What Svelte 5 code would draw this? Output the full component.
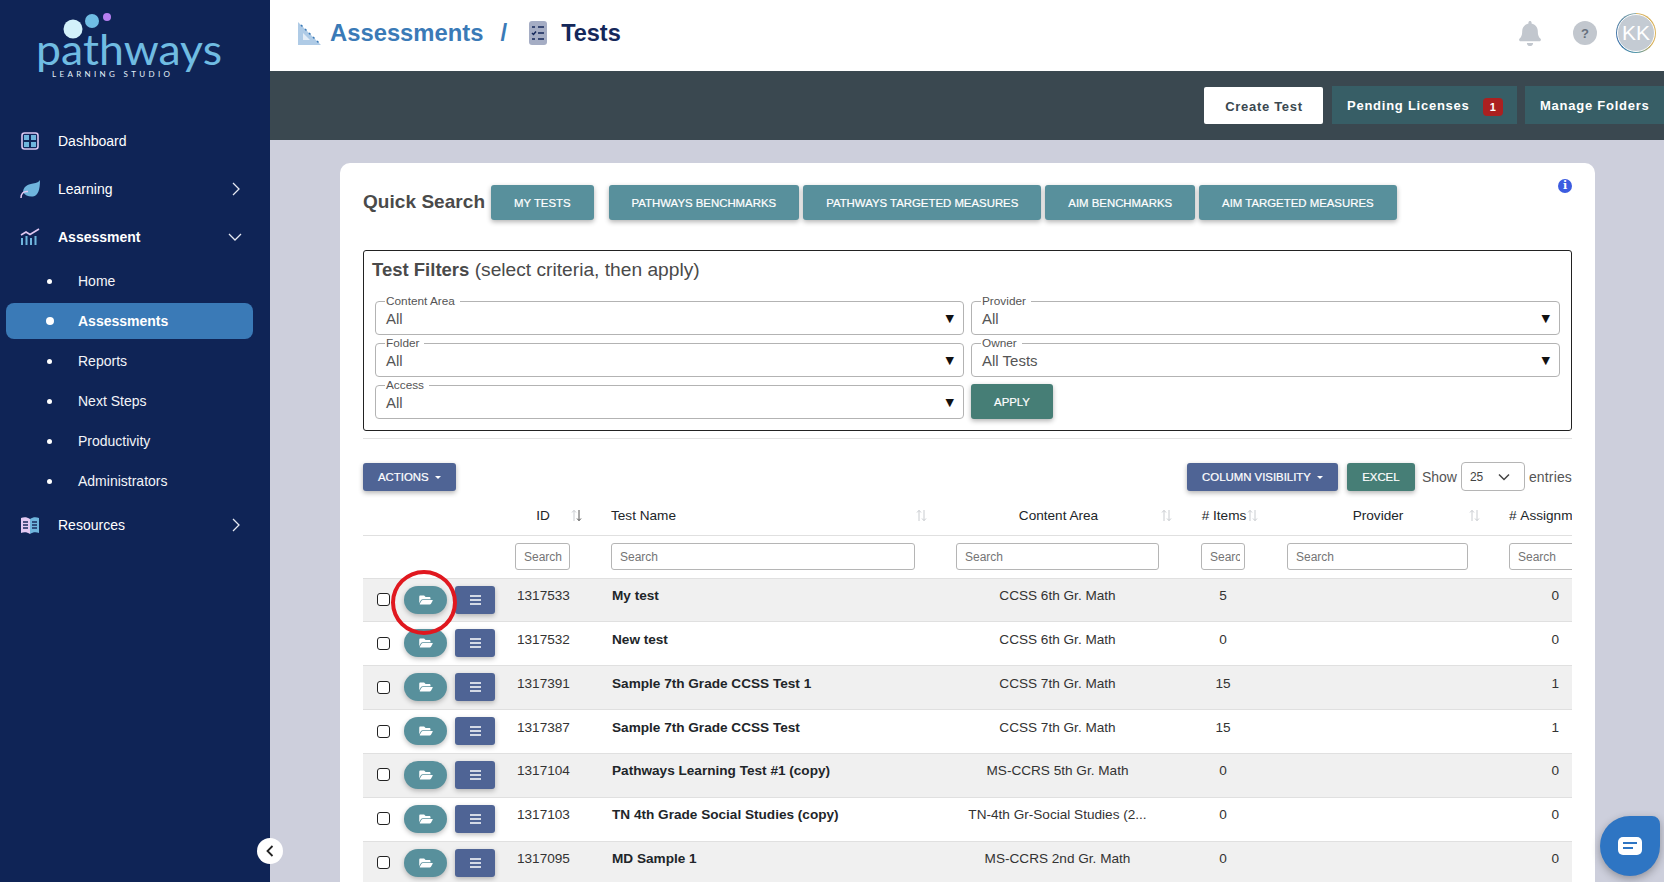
<script>
  const sub = ['Home', 'Assessments', 'Reports', 'Next Steps', 'Productivity', 'Administrators'];
  const tabs = ['MY TESTS', 'PATHWAYS BENCHMARKS', 'PATHWAYS TARGETED MEASURES', 'AIM BENCHMARKS', 'AIM TARGETED MEASURES'];
  const filters = [
    { label: 'Content Area', value: 'All' },
    { label: 'Provider', value: 'All' },
    { label: 'Folder', value: 'All' },
    { label: 'Owner', value: 'All Tests' },
    { label: 'Access', value: 'All' }
  ];
  const rows = [
    ['1317533', 'My test', 'CCSS 6th Gr. Math', '5', '0'],
    ['1317532', 'New test', 'CCSS 6th Gr. Math', '0', '0'],
    ['1317391', 'Sample 7th Grade CCSS Test 1', 'CCSS 7th Gr. Math', '15', '1'],
    ['1317387', 'Sample 7th Grade CCSS Test', 'CCSS 7th Gr. Math', '15', '1'],
    ['1317104', 'Pathways Learning Test #1 (copy)', 'MS-CCRS 5th Gr. Math', '0', '0'],
    ['1317103', 'TN 4th Grade Social Studies (copy)', 'TN-4th Gr-Social Studies (2...', '0', '0'],
    ['1317095', 'MD Sample 1', 'MS-CCRS 2nd Gr. Math', '0', '0']
  ];
  const cols = [
    { label: 'ID', cls: 'center', active: true },
    { label: 'Test Name', cls: 'left' },
    { label: 'Content Area', cls: 'center' },
    { label: '# Items', cls: 'center' },
    { label: 'Provider', cls: 'center' }
  ];
</script>

{#snippet chevronRight()}
  <svg class="chev" width="10" height="14" viewBox="0 0 10 14"><path d="M2 1l6 6-6 6" fill="none" stroke="#e6e9f2" stroke-width="1.3"/></svg>
{/snippet}

{#snippet sortIcon(active)}
  <svg class="sort" width="11" height="13" viewBox="0 0 11 13">
    <path d="M3 12V1.5M1 3.5l2-2.2 2 2.2" fill="none" stroke="#c9ccd0" stroke-width="1"/>
    <path d="M8 1v10.5M6 9.5l2 2.2 2-2.2" fill="none" stroke={active ? '#555' : '#c9ccd0'} stroke-width="1"/>
  </svg>
{/snippet}

<div class="app">
  <aside class="sidebar">
    <svg class="logo" width="270" height="117" viewBox="0 0 270 117">
      <circle cx="73" cy="29" r="9.5" fill="#d3f1fa"/>
      <circle cx="92" cy="21" r="7" fill="#6fbde4"/>
      <circle cx="107" cy="17" r="4" fill="#b77ff0"/>
      <text x="36" y="65" font-family="Lato, sans-serif" font-size="42" textLength="186" lengthAdjust="spacingAndGlyphs" fill="#70bce2">pathways</text>
      <text x="52" y="77" font-family="Lato, sans-serif" font-size="8" textLength="118" fill="#e4f1fa">LEARNING STUDIO</text>
    </svg>
    <nav>
      <div class="item">
        <svg class="ico" width="20" height="18" viewBox="0 0 20 18"><rect x="2" y="1" width="16" height="16" rx="2.5" fill="#10265a" stroke="#dcc9f2" stroke-width="1.6"/><path d="M4 3h5v5H4zM11 3h5v5h-5zM4 10h5v5H4zM11 10h5v5h-5z" fill="#6fb5dd"/></svg>
        <span>Dashboard</span>
      </div>
      <div class="item">
        <svg class="ico" width="20" height="19" viewBox="0 0 20 19"><path d="M20 0c-1 2-3 3-7 3.500C7 4.300 3.500 7 3 12c2 3.500 6 5 10 4.500 5-1 7-6 7-16.500z" fill="#6fb5dd"/><path d="M1 18c0-4 2-7 7-6.500" fill="none" stroke="#e2c9f2" stroke-width="1.5"/></svg>
        <span>Learning</span>
        {@render chevronRight()}
      </div>
      <div class="item open">
        <svg class="ico" width="20" height="18" viewBox="0 0 20 18"><path d="M1 7l5-3 4 2.500L19 1" fill="none" stroke="#e2c9f2" stroke-width="1.600"/><path d="M2 10v7M6.500 8v9M11 10v7M15.500 8v9" stroke="#6fb5dd" stroke-width="2"/></svg>
        <b>Assessment</b>
        <svg class="chev" width="14" height="10" viewBox="0 0 14 10"><path d="M1 2l6 6 6-6" fill="none" stroke="#e6e9f2" stroke-width="1.3"/></svg>
      </div>
      {#each sub as s, i}
        <div class="subitem" class:active={i === 1}>
          <i class="dot"></i>
          <span>{s}</span>
        </div>
      {/each}
      <div class="item">
        <svg class="ico" width="20" height="19" viewBox="0 0 20 19"><path d="M1 2c3-1 6-1 9 1v15c-3-2-6-2-9-1z" fill="#e2c9f2"/><path d="M19 2c-3-1-6-1-9 1v15c3-2 6-2 9-1z" fill="#6fb5dd"/><path d="M3 6h5M3 9h5M3 12h5M12 6h5M12 9h5M12 12h5" stroke="#1a2c5e" stroke-width="1.300"/></svg>
        <span>Resources</span>
        {@render chevronRight()}
      </div>
    </nav>
    <button class="collapse" aria-label="Collapse sidebar">
      <svg width="8" height="12" viewBox="0 0 8 12"><path d="M6.500 1L1.500 6l5 5" fill="none" stroke="#222" stroke-width="1.800"/></svg>
    </button>
  </aside>

  <main>
    <header>
      <svg class="crumb-a" width="23" height="23" viewBox="0 0 23 23"><path d="M0 0l23 23H0z" fill="#afcbe6"/><path d="M5 11l7 7H5z" fill="#e3edf7"/><path d="M3 3l1.500 1.500M7 7l1.500 1.500M11 11l1.500 1.500M15 15l1.500 1.500M19 19l1.500 1.500" stroke="#3a7ab7" stroke-width="1.500"/></svg>
      <span class="crumb1">Assessments</span>
      <span class="slash">/</span>
      <svg class="crumb-b" width="18" height="24" viewBox="0 0 18 24"><rect width="18" height="24" rx="3" fill="#a5adc4"/><path d="M9 6h6M9 12h6M9 18h6" stroke="#14275a" stroke-width="1.600"/><path d="M3 6h3M3 18h3M3 12l1.500 1.500L7 10.500" fill="none" stroke="#14275a" stroke-width="1.500"/></svg>
      <span class="crumb2">Tests</span>
      <svg class="bell" width="22" height="25" viewBox="0 0 448 512"><path fill="#c2c7ce" d="M224 512c35.320 0 63.970-28.650 63.970-64H160.030c0 35.350 28.650 64 63.970 64zm215.390-149.710c-19.320-20.760-55.470-51.990-55.470-154.290 0-77.700-54.480-139.900-127.940-155.160V32c0-17.670-14.320-32-31.980-32s-31.980 14.330-31.980 32v20.840C118.560 68.100 64.080 130.300 64.080 208c0 102.300-36.150 133.530-55.470 154.290-6 6.450-8.660 14.160-8.610 21.710.11 16.400 12.980 32 32.100 32h383.800c19.120 0 32-15.600 32.100-32 .05-7.550-2.610-15.270-8.610-21.710z"/></svg>
      <span class="help">?</span>
      <span class="avatar"><span>KK</span></span>
    </header>

    <div class="bar">
      <button class="create">Create Test</button>
      <button class="dark pending">Pending Licenses <em>1</em></button>
      <button class="dark manage">Manage Folders</button>
    </div>

    <div class="content">
      <section class="card">
        <div class="quick">
          <h2>Quick Search</h2>
          {#each tabs as t, i}
            <button class="tab" class:first={i === 0}>{t}</button>
          {/each}
          <span class="info">i</span>
        </div>

        <div class="filters">
          <h3><b>Test Filters</b> (select criteria, then apply)</h3>
          <div class="fgrid">
            {#each filters as f}
              <fieldset>
                <legend>{f.label}</legend>
                <div class="fval"><span>{f.value}</span><i>▼</i></div>
              </fieldset>
            {/each}
            <div class="applycell"><button class="apply">APPLY</button></div>
          </div>
        </div>
        <hr />

        <div class="tools">
          <button class="act">ACTIONS <i class="caret"></i></button>
          <div class="spacer"></div>
          <button class="act">COLUMN VISIBILITY <i class="caret"></i></button>
          <button class="excel">EXCEL</button>
          <span class="lbl">Show</span>
          <div class="show"><span>25</span><svg width="12" height="8" viewBox="0 0 12 8"><path d="M1 1.500l5 5 5-5" fill="none" stroke="#444" stroke-width="1.500"/></svg></div>
          <span class="lbl">entries</span>
        </div>

        <div class="tablewrap">
          <table>
            <colgroup>
              <col style="width:144px" /><col style="width:96px" /><col style="width:345px" /><col style="width:245px" /><col style="width:86px" /><col style="width:222px" /><col style="width:71px" />
            </colgroup>
            <thead>
              <tr class="heads">
                <th></th>
                {#each cols as c}
                  <th><div class="thi"><span class={c.cls}>{c.label}</span>{@render sortIcon(c.active)}</div></th>
                {/each}
                <th class="assign">#&nbsp;Assignments</th>
              </tr>
              <tr class="searches">
                <th></th>
                <th><input class="w55" placeholder="Search" /></th>
                <th><input class="w304" placeholder="Search" /></th>
                <th><input class="w203" placeholder="Search" /></th>
                <th><input class="w44" placeholder="Search" /></th>
                <th><input class="w181" placeholder="Search" /></th>
                <th><input class="w100" placeholder="Search" /></th>
              </tr>
            </thead>
            <tbody>
              {#each rows as r, i}
                <tr class:odd={i % 2 === 0}>
                  <td>
                    <div class="acts">
                      <input class="cb" type="checkbox" />
                      <button class="folder" aria-label="Open folder">
                        <svg width="14" height="12" viewBox="0 0 576 512"><path fill="#fff" d="M572.694 292.093L500.270 416.248A63.997 63.997 0 0 1 444.989 448H45.025c-18.523 0-30.064-20.093-20.731-36.093l72.424-124.155A64 64 0 0 1 152 256h399.964c18.523 0 30.064 20.093 20.730 36.093zM152 224h328v-48c0-26.510-21.490-48-48-48H272l-64-64H48C21.490 64 0 85.490 0 112v278.046l69.077-118.418C86.214 242.250 117.989 224 152 224z"/></svg>
                      </button>
                      <button class="menu" aria-label="Menu">
                        <svg width="11" height="10" viewBox="0 0 11 10"><path d="M0 1h11M0 5h11M0 9h11" stroke="#fff" stroke-width="1.400"/></svg>
                      </button>
                      {#if i === 0}<i class="ring"></i>{/if}
                    </div>
                  </td>
                  <td class="id"><span class="txt">{r[0]}</span></td>
                  <td class="name"><span class="txt">{r[1]}</span></td>
                  <td class="ctr"><span class="txt">{r[2]}</span></td>
                  <td class="ctr"><span class="txt">{r[3]}</span></td>
                  <td></td>
                  <td class="num"><span class="txt">{r[4]}</span></td>
                </tr>
              {/each}
            </tbody>
          </table>
        </div>
      </section>
    </div>
  </main>

  <button class="chat" aria-label="Chat">
    <svg width="24" height="18" viewBox="0 0 24 18"><rect width="24" height="18" rx="5" fill="#fff"/><path d="M5 6h14M5 11h10" stroke="#2e75c3" stroke-width="2"/></svg>
  </button>
</div>

<style>
  :global(body) { margin: 0; overflow: hidden; background: #cdcfdc; }
  * { box-sizing: border-box; }
  .app { display: flex; height: 882px; width: 1664px; overflow: hidden; font-family: "Liberation Sans", Arial, sans-serif; color: #212529; font-size: 14px; position: relative; }
  button { font-family: inherit; border: 0; cursor: pointer; }

  .sidebar { width: 270px; flex: none; background: #0f2456; color: #fff; position: relative; }
  .logo { display: block; }
  .item { height: 48px; display: flex; align-items: center; padding-left: 20px; padding-right: 29px; }
  .ico { width: 20px; flex: none; margin-right: 18px; }
  .item span, .item b { flex: 1; font-size: 14px; }
  .chev { flex: none; }
  .item.open { padding-right: 28px; }
  .subitem { height: 40px; display: flex; align-items: center; padding-left: 47px; font-size: 14px; color: #f3f4f8; }
  .dot { width: 5px; height: 5px; border-radius: 50%; background: #fff; margin-right: 26px; }
  .subitem.active { height: 36px; margin: 2px 17px 2px 6px; background: #3a7ab7; border-radius: 8px; padding-left: 40px; font-weight: bold; color: #fff; }
  .subitem.active .dot { width: 8px; height: 8px; margin-right: 24px; margin-left: 0; }
  .collapse { position: absolute; left: 257px; top: 838px; width: 26px; height: 26px; border-radius: 50%; background: #fff; padding: 0; display: flex; align-items: center; justify-content: center; z-index: 3; }

  main { flex: 1; min-width: 0; display: flex; flex-direction: column; }
  header { height: 71px; flex: none; background: #fff; display: flex; align-items: center; padding-left: 28px; padding-bottom: 5px; }
  .crumb-a { margin-right: 9px; }
  .crumb1 { font-size: 23.800px; font-weight: bold; color: #3a7ab7; }
  .slash { font-size: 24px; font-weight: bold; color: #3a7ab7; margin: 0 22px 0 17px; }
  .crumb-b { margin-right: 14px; }
  .crumb2 { font-size: 23.500px; font-weight: bold; color: #14275a; }
  .bell { margin-left: auto; margin-right: 32px; }
  .help { width: 24px; height: 24px; border-radius: 50%; background: #c2c7ce; color: #66707c; font-weight: bold; font-size: 13px; display: flex; align-items: center; justify-content: center; margin-right: 19px; }
  .avatar { width: 40px; height: 40px; border-radius: 50%; padding: 1px; background: conic-gradient(#d9b25c 0 35%, #4f95a8 50%, #3a6ea8 70%, #8aa 100%); margin-right: 8px; }
  .avatar span { display: flex; width: 100%; height: 100%; border-radius: 50%; background: #c4cbd3; border: 1px solid #fff; color: #fff; font-size: 21px; align-items: center; justify-content: center; }

  .bar { height: 69px; flex: none; background: #3a4850; display: flex; justify-content: flex-end; align-items: flex-start; padding-top: 15px; gap: 9px; }
  .create { width: 119px; height: 37px; margin-top: 1px; padding: 1px 0 0 1px; background: #fff; border-radius: 2px; color: #3a4850; font-weight: bold; font-size: 13px; letter-spacing: 0.700px; }
  .dark { height: 38px; background: #375e66; color: #fff; font-weight: bold; font-size: 13px; letter-spacing: 0.750px; width: 185px; text-align: left; padding: 0 0 0 15px; }
  .dark.pending { padding-top: 3px; }
  .dark em { display: inline-block; font-style: normal; background: #ab2020; border-radius: 4px; width: 20px; height: 18px; line-height: 18px; font-size: 11px; text-align: center; margin-left: 9px; letter-spacing: 0; vertical-align: -1px; }
  .dark.manage { width: 139px; margin-left: -1px; }

  .content { flex: 1; min-height: 0; padding: 23px 69px 0 70px; }
  .card { background: #fff; border-radius: 10px 10px 0 0; padding: 22px 23px 0; height: 100%; overflow: hidden; }
  .quick { display: flex; align-items: center; gap: 4px; height: 35px; }
  h2 { margin: 0 2px 2px 0; font-size: 19px; font-weight: bold; color: #4a4a4a; letter-spacing: 0.050px; white-space: nowrap; }
  .tab { height: 35px; background: #58909c; color: #fff; font-size: 11.400px; -webkit-text-stroke: 0.2px #fff; border-radius: 3px; padding: 0 23px; box-shadow: 0 2px 5px rgba(0,0,0,.3); white-space: nowrap; }
  .tab.first { margin-right: 11px; }
  .info { margin-left: auto; align-self: flex-start; margin-top: -6px; width: 14px; height: 14px; border-radius: 50%; background: #3c5ce0; color: #fff; font-size: 11px; font-weight: bold; text-align: center; line-height: 14px; font-family: "DejaVu Serif", serif; }

  .filters { margin-top: 30px; height: 181px; border: 1px solid #222; border-radius: 3px; padding: 0 11px; }
  h3 { margin: 8px 0 15px -3px; font-size: 19.200px; font-weight: normal; color: #4a4a4a; line-height: 21px; }
  h3 b { font-size: 18.500px; }
  .fgrid { display: grid; grid-template-columns: 589px 589px; column-gap: 7px; row-gap: 2px; }
  fieldset { margin: 0; height: 40px; border: 1px solid #b3b3b3; border-radius: 4px; padding: 0 9px 0 10px; min-width: 0; }
  legend { font-size: 11.800px; line-height: 12px; color: #555; padding: 0 5px 0 1px; margin-left: -1px; }
  .fval { display: flex; justify-content: space-between; align-items: center; height: 20px; margin-top: 1px; font-size: 15px; color: #555; }
  .fval i { font-style: normal; font-size: 11px; color: #111; font-family: "DejaVu Sans", sans-serif; }
  .applycell { padding-top: 5px; }
  .apply { width: 82px; height: 35px; background: #467e76; color: #fff; font-size: 11.400px; -webkit-text-stroke: 0.2px #fff; border-radius: 3px; box-shadow: 0 2px 5px rgba(0,0,0,.3); }
  hr { margin: 7px 0 0; border: 0; border-top: 1px solid #e2e2e2; }

  .tools { display: flex; align-items: center; margin-top: 23px; height: 29px; }
  .spacer { flex: 1; }
  .act { height: 28px; background: #4f6495; color: #fff; font-size: 11.400px; -webkit-text-stroke: 0.2px #fff; padding: 0 15px; border-radius: 3px; box-shadow: 0 2px 5px rgba(0,0,0,.3); white-space: nowrap; }
  .caret { display: inline-block; margin-left: 3px; vertical-align: 2px; border-top: 3.500px solid #fff; border-left: 3.500px solid transparent; border-right: 3.500px solid transparent; }
  .excel { height: 28px; width: 68px; margin-left: 9px; background: #467e76; color: #fff; font-size: 11.400px; -webkit-text-stroke: 0.2px #fff; border-radius: 3px; box-shadow: 0 2px 5px rgba(0,0,0,.3); }
  .lbl { font-size: 14px; color: #555; margin: 0 4px 0 7px; }
  .lbl:last-child { margin: 0 0 0 4px; letter-spacing: 0.150px; }
  .show { width: 64px; height: 29px; border: 1px solid #b5b5b5; border-radius: 4px; display: flex; align-items: center; justify-content: space-between; padding: 0 14px 0 8px; font-size: 12px; color: #444; }

  .tablewrap { overflow: hidden; }
  table { border-collapse: collapse; table-layout: fixed; width: 1209px; font-size: 13.600px; }
  .heads th { height: 44px; padding: 6px 21px 0 8px; font-weight: normal; border-bottom: 1px solid #e0e0e0; text-align: left; white-space: nowrap; }
  .thi { display: flex; align-items: center; }
  .thi span { flex: 1; }
  .thi .center { text-align: center; }
  .sort { flex: none; }
  .assign { padding-right: 0 !important; }
  .searches th { height: 43px; padding: 0 0 0 8px; border-bottom: 1px solid #e0e0e0; text-align: left; font-weight: normal; }
  .searches input { display: block; height: 27px; border: 1px solid #b5b5b5; border-radius: 3px; font: 12px "Liberation Sans", Arial, sans-serif; padding: 0 4px 0 8px; }
  .searches input::placeholder { color: #757575; }
  .w55 { width: 55px; } .w304 { width: 304px; } .w203 { width: 203px; } .w44 { width: 44px; } .w181 { width: 181px; } .w100 { width: 100px; }

  tbody tr { height: 43.860px; }
  tbody td { border-bottom: 1px solid #e0e0e0; vertical-align: top; padding: 7px 0 0; line-height: 20px; white-space: nowrap; }
  .txt { display: block; padding-top: 0.500px; }
  tr.odd td { background: #f0f0f0; }
  .acts { display: flex; align-items: center; position: relative; padding-left: 14px; }
  .cb { appearance: none; width: 13px; height: 13px; margin: 0 14px 0 0; border: 1px solid #222; border-radius: 3px; background: #fff; flex: none; }
  .folder { width: 43px; height: 28px; background: #58909c; border-radius: 14px; padding: 0; display: flex; align-items: center; justify-content: center; box-shadow: 0 2px 5px rgba(0,0,0,.25); }
  .menu { width: 40px; height: 28px; margin-left: 8px; background: #4f6495; border-radius: 3px; padding: 0; display: flex; align-items: center; justify-content: center; box-shadow: 0 2px 5px rgba(0,0,0,.25); }
  .ring { position: absolute; left: 28px; top: -16px; width: 66px; height: 65px; border: 4px solid #e0181f; border-radius: 50%; z-index: 2; pointer-events: none; }
  .id { padding-left: 10px; color: #333; }
  .name { padding-left: 9px; font-weight: bold; }
  .ctr { text-align: center; padding-left: 8px; padding-right: 34px; color: #333; }
  .num { text-align: right; padding-right: 13px; color: #333; }

  .chat { position: absolute; left: 1600px; top: 816px; width: 60px; height: 60px; padding: 0; background: #2e75c3; border-radius: 50% 8px 50% 50%; display: flex; align-items: center; justify-content: center; box-shadow: 0 3px 8px rgba(0,0,0,.3); z-index: 4; }
</style>
